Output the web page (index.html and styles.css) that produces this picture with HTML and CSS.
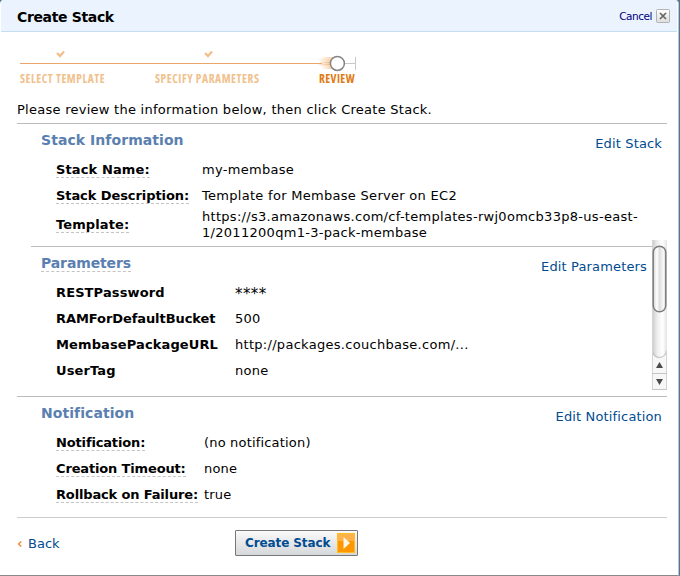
FILE: index.html
```html
<!DOCTYPE html>
<html lang="en">
<head>
<meta charset="utf-8">
<title>Create Stack</title>
<link rel="stylesheet" href="styles.css">
</head>
<body>
<div class="dialog">
  <header class="titlebar">
    <h1>Create Stack</h1>
    <a class="cancel">Cancel</a>
    <svg class="close" width="14" height="14" viewBox="0 0 14 14"><defs><linearGradient id="cg" x2="0" y2="1"><stop stop-color="#fff"/><stop offset="1" stop-color="#ddd"/></linearGradient></defs><rect x=".5" y=".5" width="13" height="13" rx="1" fill="url(#cg)" stroke="#b2b2b2"/><path d="M4 4l6 6M10 4l-6 6" stroke="#666" stroke-width="1.7"/></svg>
  </header>
  <div class="progress">
    <svg class="track" width="340" height="26" viewBox="0 0 340 26">
      <defs><linearGradient id="trail"><stop stop-color="#f3a760" stop-opacity="0"/><stop offset="1" stop-color="#f3a760" stop-opacity=".65"/></linearGradient></defs>
      <path d="M0 17.5H302" stroke="#eaa76c"/>
      <path d="M37 7l3 3 4-4.5M185 7l3 3 4-4.5" fill="none" stroke="#f1c18d" stroke-width="2.4"/>
      <rect x="300" y="11" width="15" height="2" fill="url(#trail)"/>
      <rect x="297" y="13" width="17" height="2" fill="url(#trail)"/>
      <rect x="299" y="15" width="14" height="2" fill="url(#trail)"/>
      <rect x="297" y="18" width="16" height="2" fill="url(#trail)"/>
      <rect x="301" y="20" width="13" height="3" fill="url(#trail)"/>
      <rect x="298" y="16" width="14" height="3" fill="url(#trail)"/>
      <path d="M325 17.5h10M335.5 11v13" stroke="#c9c9c9"/>
      <circle cx="317.4" cy="17.4" r="7" fill="#fff" stroke="#858585" stroke-width="1.5"/>
    </svg>
    <div class="steps"><span class="s1">SELECT TEMPLATE</span><span class="s2">SPECIFY PARAMETERS</span><span class="s3">REVIEW</span></div>
  </div>
  <p class="intro">Please review the information below, then click Create Stack.</p>
  <main>
    <section class="stack">
      <div class="head"><h2>Stack Information</h2><a>Edit Stack</a></div>
      <dl>
        <dt><span class="tip">Stack Name:</span></dt><dd>my-membase</dd>
        <dt><span class="tip tight">Stack Description:</span></dt><dd>Template for Membase Server on EC2</dd>
        <dt><span class="tip">Template:</span></dt><dd class="url">https://s3.amazonaws.com/cf-templates-rwj0omcb33p8-us-east-<br>1/2011200qm1-3-pack-membase</dd>
      </dl>
    </section>
    <section class="params">
      <div class="head"><h2><span class="tip">Parameters</span></h2><a>Edit Parameters</a></div>
      <dl>
        <dt>RESTPassword</dt><dd class="mask">****</dd>
        <dt class="tight">RAMForDefaultBucket</dt><dd>500</dd>
        <dt>MembasePackageURL</dt><dd>http://packages.couchbase.com/...</dd>
        <dt>UserTag</dt><dd>none</dd>
      </dl>
      <svg class="scrollbar" width="15" height="150" viewBox="0 0 15 150">
        <defs>
          <linearGradient id="tr"><stop stop-color="#c9c9c9"/><stop offset=".35" stop-color="#eee"/><stop offset=".7" stop-color="#fff"/><stop offset="1" stop-color="#e4e4e4"/></linearGradient>
          <linearGradient id="th"><stop stop-color="#d5d5d5"/><stop offset=".3" stop-color="#fff"/><stop offset=".5" stop-color="#dedede"/><stop offset=".85" stop-color="#fafafa"/><stop offset="1" stop-color="#bbb"/></linearGradient>
        </defs>
        <rect width="15" height="150" fill="#f7f7f7"/>
        <path d="M0 0h15v111a7.5 7.5 0 0 1-15 0z" fill="url(#tr)"/>
        <path d="M.5 117a7 7.5 0 0 0 14 0" fill="none" stroke="#bababa" transform="translate(0 -7)"/>
        <path d="M.5 0v150M14.5 110v40" stroke="#d4d4d4"/>
        <rect x="1.2" y="6.2" width="12.6" height="65.6" rx="6.3" fill="url(#th)" stroke="#7d7d7d" stroke-width="1.5"/>
        <path d="M0 133.5h15M0 149.5h15" stroke="#c5c5c5"/>
        <path d="M4 128l3.5-6 3.5 6zM4 139h7l-3.5 6z" fill="#4b4b4b"/>
      </svg>
    </section>
    <section class="notice">
      <div class="head"><h2>Notification</h2><a>Edit Notification</a></div>
      <dl>
        <dt><span class="tip">Notification:</span></dt><dd>(no notification)</dd>
        <dt><span class="tip">Creation Timeout:</span></dt><dd>none</dd>
        <dt><span class="tip">Rollback on Failure:</span></dt><dd>true</dd>
      </dl>
    </section>
  </main>
  <footer>
    <a class="back"><svg width="5" height="8" viewBox="0 0 5 8"><path d="M4.2 1.5L1.6 4l2.6 2.5" fill="none" stroke="#ee8a36" stroke-width="1.4"/></svg>Back</a>
    <button class="create"><span>Create Stack</span><svg width="18" height="20" viewBox="0 0 18 20"><rect width="18" height="20" fill="#ffbd20"/><rect x="1" y="1" width="16" height="8" fill="#ffb24a"/><rect x="1" y="8" width="16" height="11" fill="#ff9700"/><path d="M6.5 4v12l6.5-6z" fill="#fff5e4"/></svg></button>
  </footer>
</div>
</body>
</html>
```
FILE: styles.css
```css
* { box-sizing: border-box; }
body {
  margin: 0;
  background: #577787;
  font: 13px/16px "DejaVu Sans", sans-serif;
  color: #000;
}
h1, h2, p, dl, dd { margin: 0; }
a { color: #004b91; }
.dialog {
  width: 679px;
  height: 576px;
  background: #fff;
  border: solid #a9c9dd;
  border-width: 0 1px 0 0;
  border-bottom: 1px solid #888;
  border-radius: 4px 4px 0 0;
  overflow: hidden;
  display: flex;
  flex-direction: column;
}
.titlebar {
  height: 32px;
  margin: 0 1px;
  background: #eaf3fe;
  border-bottom: 1px solid #c5def2;
  display: flex;
  align-items: center;
  padding: 2px 7px 0 16px;
}
h1 { font-size: 14px; line-height: 20px; letter-spacing: -0.35px; flex: 1; }
.cancel { font: 10.5px/14px "DejaVu Sans", sans-serif; color: #000080; letter-spacing: -0.45px; margin-right: 4px; padding-bottom: 2px; }
.close { display: block; margin-bottom: 1px; }
.progress { padding: 14px 0 0 20px; height: 70px; }
.track { display: block; }
.steps {
  display: flex;
  height: 14px;
  font: bold 11.5px/14px "Open Sans", sans-serif;
  font-stretch: 75%;
  letter-spacing: 0.55px;
  color: #f1c18d;
  white-space: nowrap;
}
.s1 { width: 135px; }
.s2 { width: 164px; }
.s3 { color: #e17a12; letter-spacing: 0.4px; }
.intro { height: 21px; padding-left: 17px; letter-spacing: 0.26px; }
main { margin: 0 12px 0 17px; width: 650px; }
section { border-top: 1px solid #bcbcbc; }
.head { display: flex; justify-content: space-between; height: 33px; padding: 8px 5px 0 24px; }
h2 { font-size: 14px; line-height: 16px; color: #5a7fb0; letter-spacing: 0.06px; }
.params h2 { letter-spacing: -0.12px; }
.head a { padding-top: 4px; letter-spacing: 0.15px; }
dl { display: grid; grid-auto-rows: 26px; align-items: center; padding-left: 39px; }
dt { font-weight: bold; white-space: nowrap; letter-spacing: 0.12px; }
dd { letter-spacing: 0.29px; white-space: nowrap; }
.tight { letter-spacing: -0.08px; }
.mask { font-size: 15px; letter-spacing: 0.4px; padding-top: 2px; }
.tip { display: block; width: max-content; border-bottom: 1px dashed #c4c4c4; }
h2 .tip { height: 17px; }
dt .tip { height: 16px; }
.stack { height: 123px; }
.stack dl { grid-template-columns: 146px 1fr; grid-template-rows: 26px 26px 32px; }
.params { height: 150px; margin-left: 14px; width: 621px; position: relative; }
.params .head { padding: 8px 5px 0 10px; }
.params dl { grid-template-columns: 179px 1fr; padding-left: 25px; }
.scrollbar { position: absolute; left: 621px; top: -7px; }
.notice { height: 122px; border-bottom: 1px solid #ccc; }
.notice dl { grid-template-columns: 148px 1fr; }
.notice dt { letter-spacing: -0.15px; }
.notice dd { letter-spacing: 0.18px; }
footer { display: flex; padding: 12px 0 0 17px; }
.back { display: flex; align-items: center; gap: 6px; width: 218px; height: 27px; }
.create {
  width: 123px;
  height: 26px;
  border: 1px solid #777;
  border-radius: 1px;
  background: linear-gradient(#fafafa, #e8e8ea 50%, #d6d7d9);
  padding: 0 2px 0 9px;
  display: flex;
  align-items: center;
  justify-content: space-between;
  color: #004b91;
  font: bold 12px/16px "DejaVu Sans", sans-serif;
  letter-spacing: -0.1px;
  white-space: nowrap;
}
```
